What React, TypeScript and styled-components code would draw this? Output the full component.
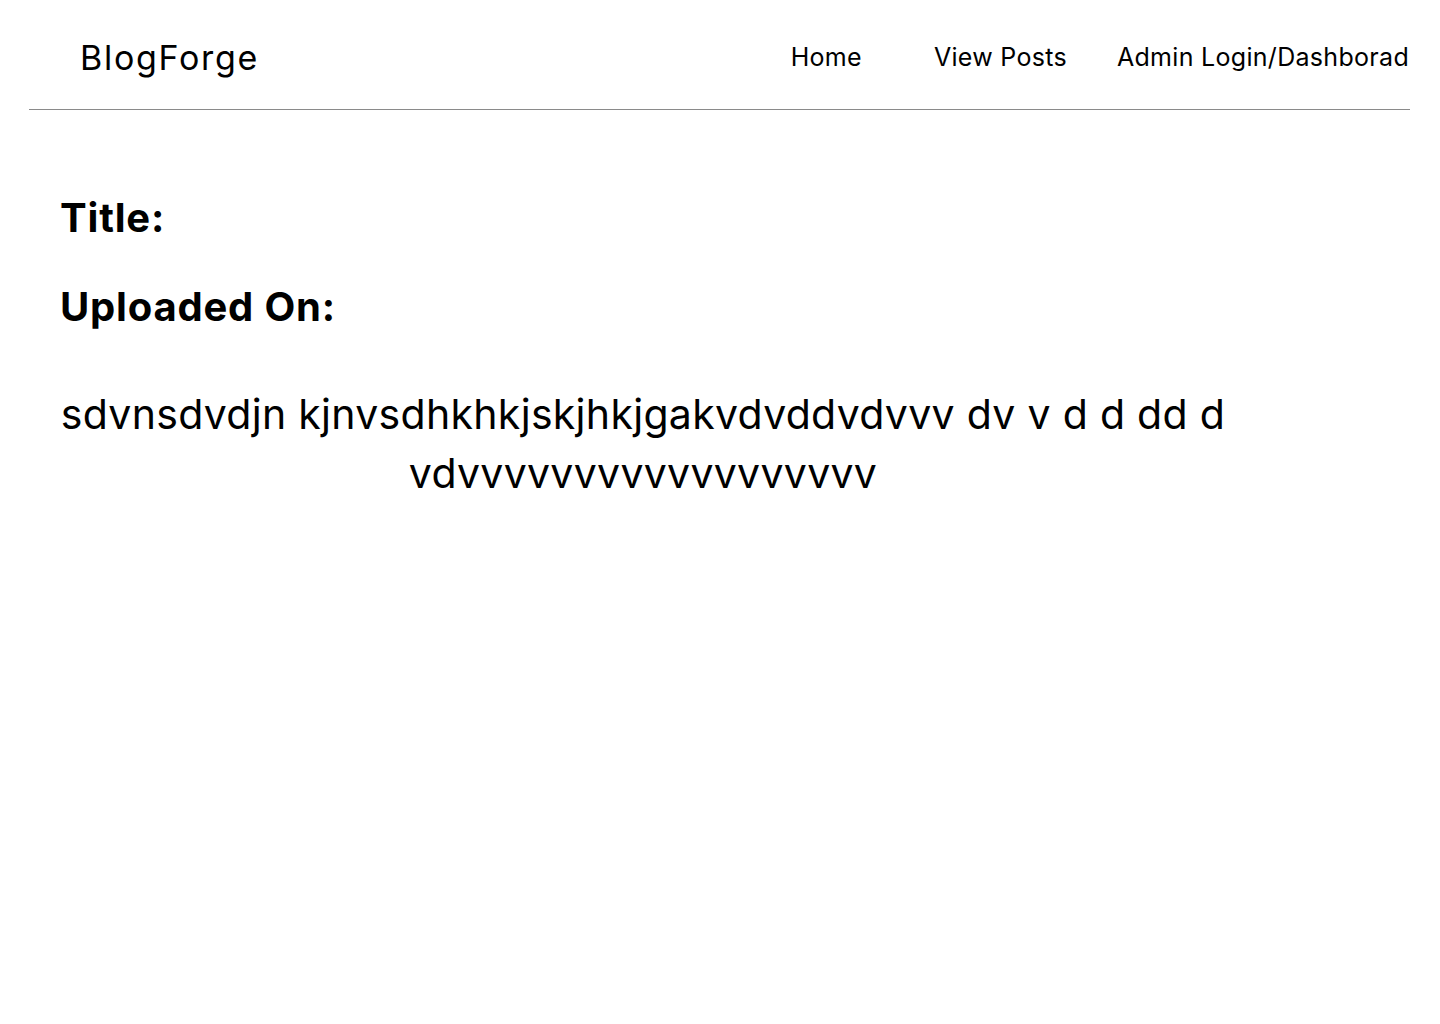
import React from "react";
import styled, { createGlobalStyle } from "styled-components";

const GlobalStyle = createGlobalStyle`
  html, body {
    margin: 0;
    padding: 0;
    background: #ffffff;
  }
  body {
    font-family: Inter, "Noto Sans", sans-serif;
    color: #000000;
  }
`;

const Header = styled.header`
  display: flex;
  align-items: center;
  justify-content: space-between;
  height: 108px;
  padding: 6px 31px 0 80px;
  box-sizing: border-box;
`;

const Logo = styled.div`
  font-size: 34px;
  font-weight: 400;
  letter-spacing: 1.7px;
`;

const Nav = styled.nav`
  display: flex;
  align-items: center;
`;

const NavLink = styled.a<{ $gap: number }>`
  margin-left: ${(p) => p.$gap}px;
  font-size: 25px;
  font-weight: 400;
  letter-spacing: 0.3px;
  color: #000;
  text-decoration: none;
`;

const Divider = styled.div`
  margin: 1px 30px 0 29px;
  height: 1px;
  background: #8a8a8a;
`;

const Main = styled.main`
  padding: 84px 60px 0;
`;

const Label = styled.h2`
  margin: 0 0 41px;
  font-size: 40px;
  line-height: 48px;
  font-weight: 700;
  letter-spacing: 0.8px;
`;

const Body = styled.p`
  margin: 54px 0 0;
  max-width: 1166px;
  text-align: center;
  font-size: 41px;
  line-height: 59px;
  font-weight: 400;
  letter-spacing: 0.3px;
`;

export default function App() {
  return (
    <>
      <GlobalStyle />
      <Header>
        <Logo>BlogForge</Logo>
        <Nav>
          <NavLink $gap={0} href="#">Home</NavLink>
          <NavLink $gap={72} href="#">View Posts</NavLink>
          <NavLink $gap={50} href="#">Admin Login/Dashborad</NavLink>
        </Nav>
      </Header>
      <Divider />
      <Main>
        <Label>Title:</Label>
        <Label>Uploaded On:</Label>
        <Body>
          sdvnsdvdjn kjnvsdhkhkjskjhkjgakvdvddvdvvv dv v d d dd d vdvvvvvvvvvvvvvvvvvv
        </Body>
      </Main>
    </>
  );
}
